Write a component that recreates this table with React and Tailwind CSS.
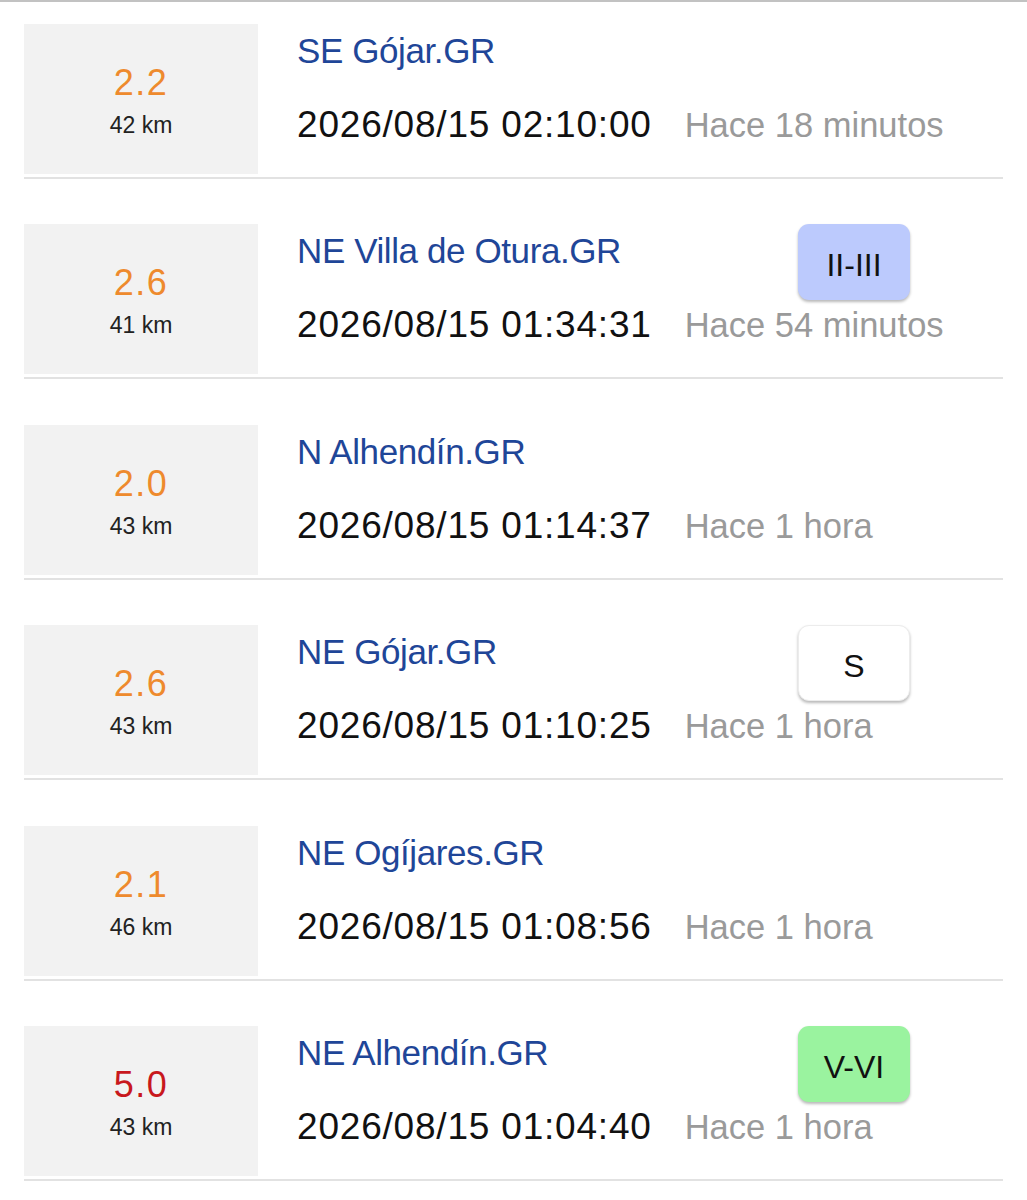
import React from "react";

const rows = [
  { mag: "2.2", km: "42 km", place: "SE Gójar.GR", date: "2026/08/15 02:10:00", ago: "Hace 18 minutos", red: false, badge: null },
  { mag: "2.6", km: "41 km", place: "NE Villa de Otura.GR", date: "2026/08/15 01:34:31", ago: "Hace 54 minutos", red: false, badge: "blue" },
  { mag: "2.0", km: "43 km", place: "N Alhendín.GR", date: "2026/08/15 01:14:37", ago: "Hace 1 hora", red: false, badge: null },
  { mag: "2.6", km: "43 km", place: "NE Gójar.GR", date: "2026/08/15 01:10:25", ago: "Hace 1 hora", red: false, badge: "white" },
  { mag: "2.1", km: "46 km", place: "NE Ogíjares.GR", date: "2026/08/15 01:08:56", ago: "Hace 1 hora", red: false, badge: null },
  { mag: "5.0", km: "43 km", place: "NE Alhendín.GR", date: "2026/08/15 01:04:40", ago: "Hace 1 hora", red: true, badge: "green" },
];

function Badge({ kind }) {
  if (kind === "blue")
    return (
      <div className="absolute top-0 right-[93px] w-[112px] h-[76px] rounded-[11px] bg-[#bccafd] shadow-[0_2px_3px_rgba(0,0,0,0.28)] flex items-center justify-center pt-[6px] text-[32px] leading-[32px] text-[#111]">
        II-III
      </div>
    );
  if (kind === "white")
    return (
      <div className="absolute top-0 right-[93px] w-[112px] h-[76px] rounded-[11px] bg-white border border-[#ececec] shadow-[0_2px_3px_rgba(0,0,0,0.28)] flex items-center justify-center pt-[6px] text-[32px] leading-[32px] text-[#111]">
        S
      </div>
    );
  return (
    <div className="absolute top-0 right-[93px] w-[112px] h-[76px] rounded-[11px] bg-[#9af39f] shadow-[0_2px_3px_rgba(0,0,0,0.28)] flex items-center justify-center pt-[6px] text-[32px] leading-[32px] text-[#111]">
      V-VI
    </div>
  );
}

export default function App() {
  return (
    <div className="w-[1027px] h-[1200px] bg-white overflow-hidden font-['Liberation_Sans',Arial,sans-serif]">
      <div className="h-[2px] bg-[#c2c2c2]" />
      <div className="px-[24px] pt-[22px]">
        {rows.map((r, i) => (
          <div key={i} className="relative mb-[45.4px]">
            <div className="flex h-[150px]">
              <div className="w-[234px] h-[150px] bg-[#f2f2f2] flex flex-col items-center pt-[41px]">
                <div className={`text-[36px] leading-[36px] tracking-[1.5px] ${r.red ? "text-[#c8181d]" : "text-[#ee8a2d]"}`}>
                  {r.mag}
                </div>
                <div className="mt-[13px] text-[23px] leading-[23px] text-[#222]">{r.km}</div>
              </div>
              <div className="ml-[39px] flex-1 pt-[9px]">
                <div className="text-[35px] leading-[35px] text-[#1f4698] tracking-[-0.4px]">{r.place}</div>
                <div className="mt-[38px] flex items-baseline whitespace-nowrap">
                  <span className="text-[37px] leading-[37px] text-[#111] tracking-[0.8px]">{r.date}</span>
                  <span className="ml-[33px] text-[34.5px] leading-[37px] text-[#9a9a9a]">{r.ago}</span>
                </div>
              </div>
            </div>
            <div className="mt-[3px] h-[2px] bg-[#e2e2e2]" />
            {r.badge && <Badge kind={r.badge} />}
          </div>
        ))}
      </div>
    </div>
  );
}
